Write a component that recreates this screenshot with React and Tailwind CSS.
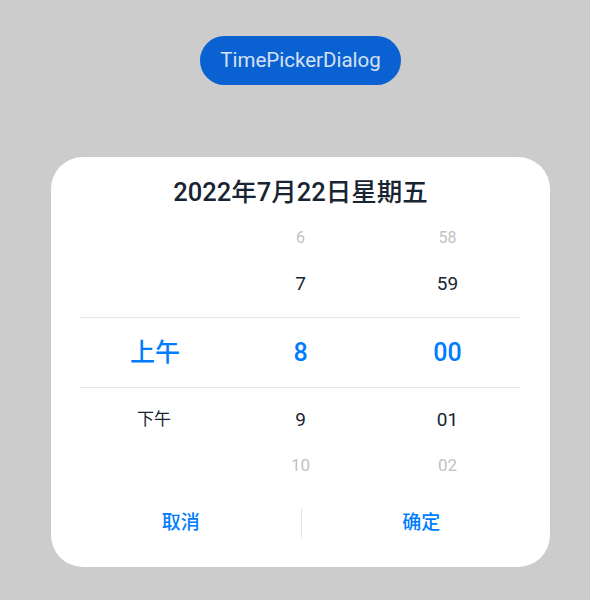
export default function App() {
  const font = { fontFamily: 'Roboto, "Noto Sans CJK SC", sans-serif' };
  return (
    <div className="w-[590px] h-[600px] overflow-hidden bg-[#cccccc] flex flex-col items-center pl-[11px]" style={font}>
      <button className="mt-[36px] w-[201px] h-[49px] rounded-full bg-[#0a62d2] text-[#d6e0f2] text-[20.5px] leading-none flex items-center justify-center">
        TimePickerDialog
      </button>
      <div className="mt-[72px] w-[499px] h-[410px] bg-white rounded-[32px] flex flex-col items-center">
        <div className="mt-[19px] h-[32px] flex items-center text-[25.5px] font-medium text-[#182431]">
          2022年7月22日星期五
        </div>
        <div className="mt-[12px] w-[441px] flex flex-col">
          <div className="h-[36px] grid grid-cols-3 items-center text-[16px] text-[#c2c2c2]">
            <div />
            <div className="text-center">6</div>
            <div className="text-center">58</div>
          </div>
          <div className="h-[61px] pb-[5px] grid grid-cols-3 items-center text-[19px] text-[#182431]">
            <div />
            <div className="text-center">7</div>
            <div className="text-center">59</div>
          </div>
          <div className="h-px bg-[#e8e8e8]" />
          <div className="h-[69px] grid grid-cols-3 items-center text-[25px] font-medium text-[#007dff]">
            <div className="text-center pl-[3px]">上午</div>
            <div className="text-center">8</div>
            <div className="text-center">00</div>
          </div>
          <div className="h-px bg-[#e8e8e8]" />
          <div className="h-[64px] grid grid-cols-3 items-center text-[19px] text-[#182431]">
            <div className="text-center pl-[1px] text-[17px]">下午</div>
            <div className="text-center">9</div>
            <div className="text-center">01</div>
          </div>
          <div className="h-[28px] grid grid-cols-3 items-center text-[17px] text-[#c2c2c2]">
            <div />
            <div className="text-center">10</div>
            <div className="text-center">02</div>
          </div>
        </div>
        <div className="mt-[27px] w-[499px] h-[32px] flex items-center text-[19px] font-medium text-[#007dff]">
          <div className="flex-1 text-center pl-[10px]">取消</div>
          <div className="w-px h-[30px] bg-[#e6e6e6]" />
          <div className="flex-1 text-center pr-[9px]">确定</div>
        </div>
      </div>
    </div>
  );
}
